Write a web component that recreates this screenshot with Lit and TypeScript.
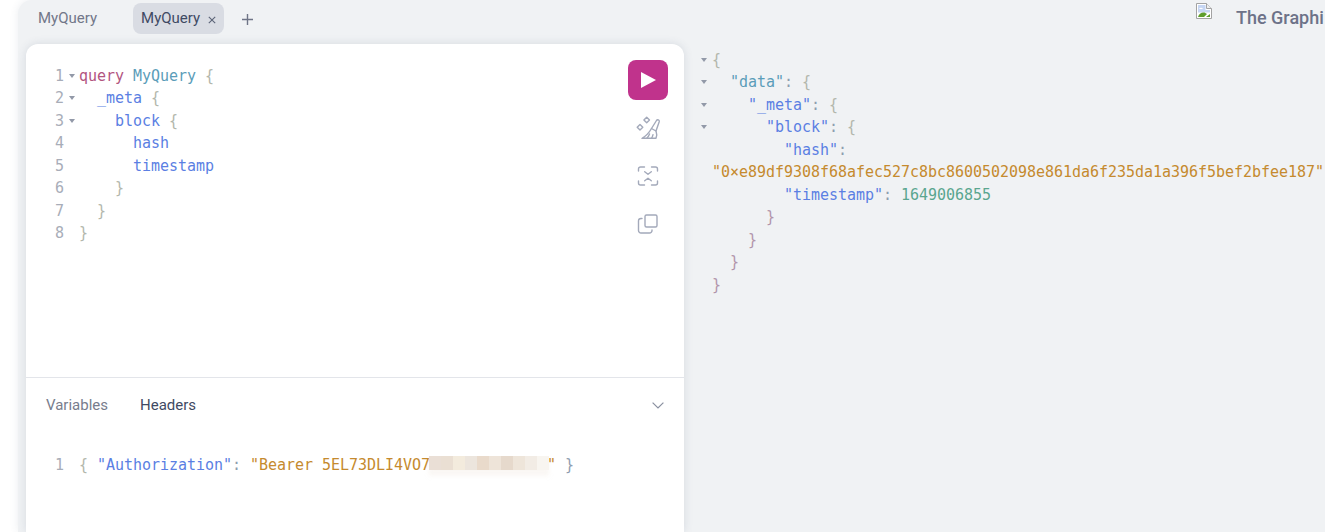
import { LitElement, html, css, svg } from "lit";
import { customElement } from "lit/decorators.js";

type Tok = [string, string];

const Q: Tok[][] = [
  [["kw", "query"], ["p", " "], ["def", "MyQuery"], ["p", " {"]],
  [["p", "  "], ["prop", "_meta"], ["p", " {"]],
  [["p", "    "], ["prop", "block"], ["p", " {"]],
  [["p", "      "], ["prop", "hash"]],
  [["p", "      "], ["prop", "timestamp"]],
  [["p", "    }"]],
  [["p", "  }"]],
  [["p", "}"]],
];

const R: { f?: boolean; t: Tok[] }[] = [
  { f: true, t: [["p", "{"]] },
  { f: true, t: [["p", "  "], ["def", '"data"'], ["c", ": "], ["p", "{"]] },
  { f: true, t: [["p", "    "], ["prop", '"_meta"'], ["c", ": "], ["p", "{"]] },
  { f: true, t: [["p", "      "], ["prop", '"block"'], ["c", ": "], ["p", "{"]] },
  { t: [["p", "        "], ["prop", '"hash"'], ["c", ":"]] },
  { t: [["str", '"0×e89df9308f68afec527c8bc8600502098e861da6f235da1a396f5bef2bfee187"']] },
  { t: [["p", "        "], ["prop", '"timestamp"'], ["c", ": "], ["num", "1649006855"]] },
  { t: [["cl", "      }"]] },
  { t: [["cl", "    }"]] },
  { t: [["cl", "  }"]] },
  { t: [["cl", "}"]] },
];

const BLUR = ["#eadfd6", "#eadfd3", "#f3ebdd", "#ece5dd", "#e9dacb", "#eee4d9", "#e6d9cc", "#eee5da", "#f2ece5", "#f8f5f0"];

const toks = (t: Tok[]) => t.map(([c, s]) => html`<span class=${c}>${s}</span>`);

@customElement("app-root")
export class AppRoot extends LitElement {
  static styles = css`
    :host {
      display: flex;
      width: 1325px;
      height: 532px;
      overflow: hidden;
      background: #fff;
      font-family: Roboto, sans-serif;
    }
    .shell {
      margin-left: 18px;
      flex: 1;
      min-width: 0;
      background: #f0f2f4;
      border-top-left-radius: 14px;
      box-shadow: 0 0 8px rgba(59, 75, 104, 0.1);
      display: flex;
      flex-direction: column;
    }
    .tabs {
      height: 44px;
      flex: none;
      display: flex;
      align-items: flex-start;
      font-size: 15px;
      color: #727789;
    }
    .tab {
      margin: 3px 0 0 20px;
      height: 31px;
      line-height: 31px;
    }
    .tab.active {
      margin-left: 36px;
      width: 91px;
      box-sizing: border-box;
      padding-left: 8px;
      background: #d9dce3;
      border-radius: 8px;
      color: #3f4a63;
      display: flex;
      align-items: center;
      gap: 8px;
    }
    .x { width: 8px; height: 8px; margin-top: 2px; }
    .plus { width: 11px; height: 11px; margin: 14px 0 0 18px; }
    .logo {
      margin-left: auto;
      width: 129px;
      flex: none;
      overflow: hidden;
      display: flex;
      white-space: nowrap;
      font-size: 18px;
      font-weight: 500;
      color: #6d7288;
    }
    .logo svg { width: 16px; height: 16px; margin-top: 3px; flex: none; }
    .logo span { margin: 7px 0 0 24px; line-height: 22px; }
    .body { flex: 1; display: flex; min-height: 0; }
    .card {
      margin-left: 8px;
      width: 658px;
      flex: none;
      background: #fff;
      border-radius: 12px 12px 0 0;
      box-shadow: 0 0 10px rgba(59, 75, 104, 0.14);
      display: flex;
      flex-direction: column;
    }
    .editor {
      height: 334px;
      flex: none;
      box-sizing: border-box;
      border-bottom: 1px solid #e3e5ea;
      padding: 16px 16px 0 0;
      display: flex;
      justify-content: space-between;
    }
    .code, .result {
      font-family: "DejaVu Sans Mono", monospace;
      font-size: 15px;
      line-height: 22.5px;
      letter-spacing: -0.03px;
    }
    .code { padding-top: 4.75px; }
    .line span, .rline span { white-space: pre; }
    .line { display: flex; height: 22.5px; }
    .num { width: 9px; margin-left: 29px; color: #a8adb8; flex: none; }
    .gut { width: 15px; flex: none; position: relative; }
    .fold {
      display: block;
      width: 0;
      height: 0;
      border-left: 3px solid transparent;
      border-right: 3px solid transparent;
      border-top: 4px solid #9299a8;
    }
    .gut .fold { margin: 9px 0 0 5px; }
    .kw { color: #b2557f; }
    .def { color: #5b9db9; }
    .prop { color: #5b7fe3; }
    .p { color: #b3b7ac; }
    .c { color: #8f9db0; }
    .cl { color: #b295ab; }
    .str { color: #c58a2e; }
    .numv { color: #5aa68f; }
    .tools {
      display: flex;
      flex-direction: column;
      align-items: center;
      width: 40px;
    }
    .run {
      width: 40px;
      height: 40px;
      border-radius: 8px;
      background: #c0338c;
      margin-bottom: 16px;
    }
    .run svg { width: 40px; height: 40px; display: block; }
    .tool { width: 24px; height: 24px; margin-bottom: 24px; display: block; }
    .vars { flex: 1; display: flex; flex-direction: column; min-height: 0; }
    .vtabs {
      display: flex;
      align-items: center;
      height: 54px;
      flex: none;
      padding: 0 20px;
      gap: 32px;
      font-size: 15px;
      color: #787d8d;
    }
    .vtabs .on { color: #3f4a63; }
    .vtabs svg { margin-left: auto; width: 12px; height: 7px; }
    .code.vcode { padding-top: 21.75px; }
    .red { position: relative; display: inline-block; }
    .blur {
      position: absolute;
      left: -1px;
      top: 2px;
      display: flex;
      filter: blur(0.6px);
      box-shadow: 0 6px 4px rgba(240, 232, 224, 0.35);
    }
    .blur i { display: block; width: 12px; height: 14px; }
    .result { flex: 1; min-width: 0; padding-top: 4.75px; overflow: hidden; }
    .rline { display: flex; height: 22.5px; }
    .rgut { width: 28px; flex: none; }
    .rgut .fold { margin: 9px 0 0 17px; }
  `;

  private ico(paths: ReturnType<typeof svg>) {
    return html`<svg class="tool" viewBox="0 0 24 24" fill="none" stroke="#a3a9ba" stroke-width="1.4" stroke-linecap="round" stroke-linejoin="round">${paths}</svg>`;
  }

  render() {
    return html`
      <div class="shell">
        <div class="tabs">
          <div class="tab">MyQuery</div>
          <div class="tab active">
            MyQuery
            <svg class="x" viewBox="0 0 8 8" fill="none" stroke="#5c6478" stroke-width="1.1"><path d="M.8.8l6.4 6.4M7.2.8L.8 7.2" /></svg>
          </div>
          <svg class="plus" viewBox="0 0 11 11" fill="none" stroke="#6f7587" stroke-width="1.4"><path d="M5.5 0v11M0 5.5h11" /></svg>
          <div class="logo">
            <svg viewBox="0 0 16 16">
              <path d="M.5.5h10l5 5v10H.5z" fill="#fff" stroke="#a3a3a3" />
              <path d="M10.5.5v5h5" fill="#eee" stroke="#a3a3a3" />
              <path d="M2 2h7.500v5H14v2.500H2z" fill="#c6d6f3" />
              <path d="M3 6c1-1.600 3-1.600 4 0z" fill="#fff" />
              <path d="M2 14c.6-3 3.500-5 6.500-4.500L11 11l-3 3z" fill="#5f9e2e" />
              <path d="M10 14h4v-3z" fill="#5f9e2e" />
            </svg>
            <span>The Graphi</span>
          </div>
        </div>
        <div class="body">
          <div class="card">
            <div class="editor">
              <div class="code">
                ${Q.map((l, i) => html`<div class="line"><span class="num">${i + 1}</span><span class="gut">${i < 3 ? html`<i class="fold"></i>` : ""}</span><span>${toks(l)}</span></div>`)}
              </div>
              <div class="tools">
                <div class="run"><svg viewBox="0 0 40 40"><path d="M13 12l15 8-15 8z" fill="#fff" /></svg></div>
                ${this.ico(svg`
                  <path d="M15.500 12.500L20.500 4.500a1.500 1.500 0 0 1 2.700 1.200L20 15z" />
                  <path d="M15.500 12.500C13.500 16 10 20 6 22.300H20c.8-2.300.8-5.300 0-7.300" />
                  <path d="M11 22c1-1 2-2.500 2.500-4M15.500 22.300c.7-1 1.200-2.400 1.500-3.700" />
                  <path d="M10.700 1.200l2.800 2.800-2.800 2.800L7.900 4z" />
                  <path d="M4 8.500l2.800 2.800L4 14.100 1.200 11.300z" />
                `)}
                ${this.ico(svg`
                  <path d="M2.500 7V5A2 2 0 0 1 4.500 3H8.500M15.500 3h4a2 2 0 0 1 2 2V7M21.500 17v2a2 2 0 0 1-2 2H15.500M8.500 21H4.500a2 2 0 0 1-2-2V17" />
                  <path d="M8.700 7.700l3.300 2.600 3.300-2.600M8.700 16.800l3.300-2.600 3.300 2.600" />
                `)}
                ${this.ico(svg`
                  <rect x="9" y="3" width="12" height="12" rx="1.500" />
                  <path d="M6 6.500H5A2.500 2.500 0 0 0 2.500 9v9.500A2.500 2.500 0 0 0 5 21h8.500a2.500 2.500 0 0 0 2.500-2.500v-.500" />
                `)}
              </div>
            </div>
            <div class="vars">
              <div class="vtabs">
                <span>Variables</span>
                <span class="on">Headers</span>
                <svg viewBox="0 0 12 7" fill="none" stroke="#8a90a0" stroke-width="1.200"><path d="M.6.6L6 6l5.400-5.400" /></svg>
              </div>
              <div class="code vcode">
                <div class="line">
                  <span class="num">1</span><span class="gut"></span>
                  <span><span class="p">{ </span><span class="prop">"Authorization"</span><span class="c">: </span><span class="str">"Bearer 5EL73DLI4VO7</span><span class="red"><span class="str">             </span><span class="blur">${BLUR.map((c) => html`<i style="background:${c}"></i>`)}</span></span><span class="str">"</span><span class="p"> </span><span class="c">}</span></span>
                </div>
              </div>
            </div>
          </div>
          <div class="result">
            ${R.map((l) => html`<div class="rline"><span class="rgut">${l.f ? html`<i class="fold"></i>` : ""}</span><span>${l.t.map(([c, s]) => html`<span class=${c === "num" ? "numv" : c}>${s}</span>`)}</span></div>`)}
          </div>
        </div>
      </div>
    `;
  }
}
